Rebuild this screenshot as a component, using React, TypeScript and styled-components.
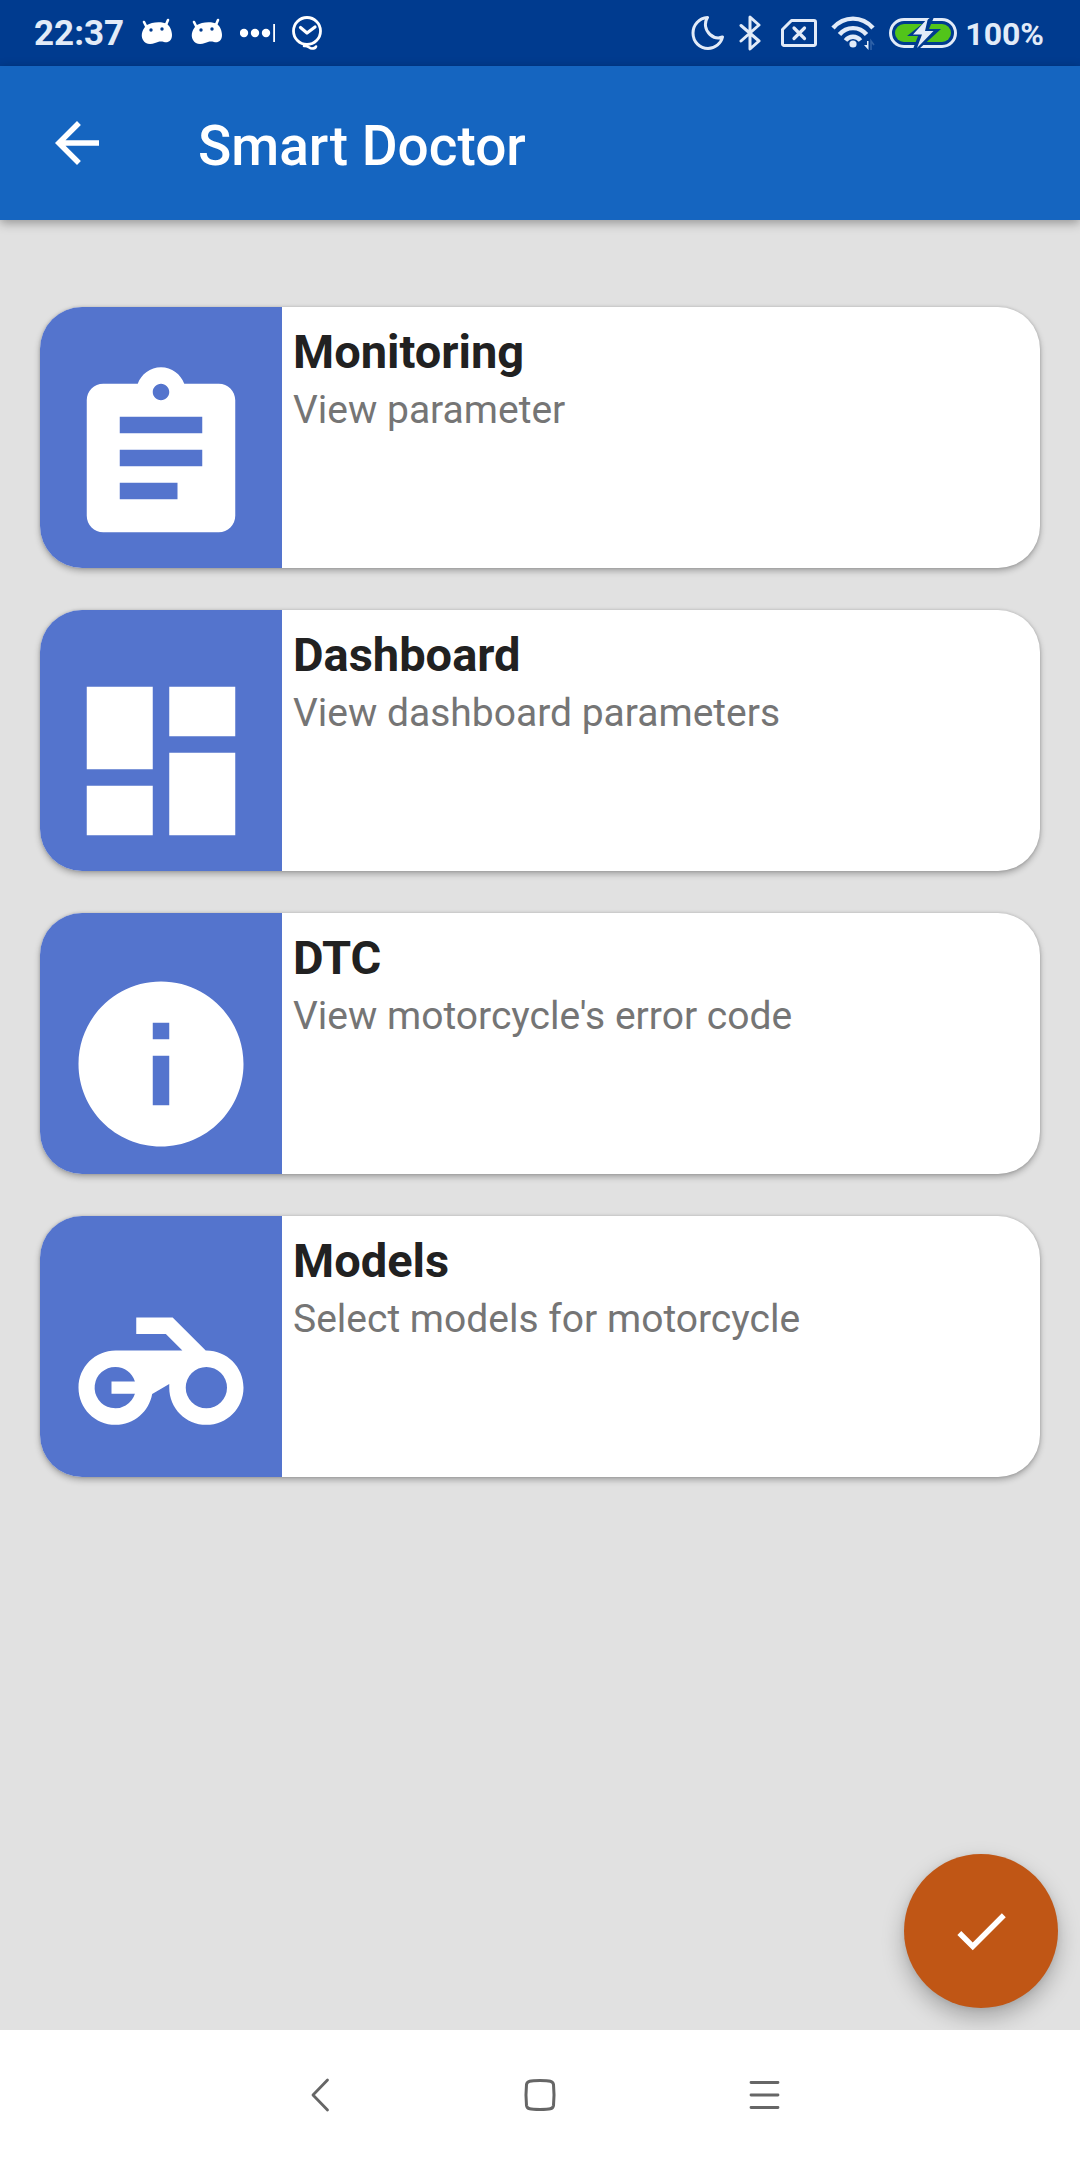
import React from "react";
import styled, { createGlobalStyle } from "styled-components";

const Global = createGlobalStyle`
  *, *::before, *::after { box-sizing: border-box; }
  body { margin: 0; font-family: Roboto, "Noto Sans", sans-serif; background: #e1e1e1; }
  h1, h2, p, ul { margin: 0; padding: 0; }
  button { border: 0; padding: 0; font: inherit; cursor: pointer; }
  svg { display: block; flex: none; }
`;

const Page = styled.div`
  min-height: 100vh;
  display: flex;
  flex-direction: column;
`;

const StatusBar = styled.div`
  height: 66px;
  padding: 0 36px 0 34px;
  display: flex;
  align-items: center;
  justify-content: space-between;
  background: #003b8f;
  color: #e2ebf8;
`;

const StatusGroup = styled.div<{ $gap: number }>`
  display: flex;
  align-items: center;
  gap: ${(p) => p.$gap}px;
`;

const StatusText = styled.span<{ $size: number }>`
  font-size: ${(p) => p.$size}px;
  line-height: 40px;
  padding-top: 2px;
  font-weight: 700;
`;

const AppBar = styled.header`
  position: relative;
  height: 154px;
  padding: 0 44px;
  display: flex;
  align-items: center;
  gap: 88px;
  background: #1565c0;
  color: #fff;
  box-shadow: 0 3px 10px rgba(0, 0, 0, 0.34);
`;

const IconButton = styled.button`
  display: grid;
  place-items: center;
  background: none;
  color: inherit;
`;

const AppTitle = styled.h1`
  font-size: 55px;
  line-height: 64px;
  font-weight: 500;
  padding-top: 6px;
`;

const Content = styled.main`
  position: relative;
  flex: 1;
  padding: 87px 40px;
`;

const CardList = styled.ul`
  list-style: none;
  display: flex;
  flex-direction: column;
  gap: 42px;
`;

const Card = styled.li`
  display: flex;
  min-height: 261px;
  border-radius: 42px;
  overflow: hidden;
  background: #fff;
  box-shadow: 0 3px 6px rgba(0, 0, 0, 0.28), 0 0 3px rgba(0, 0, 0, 0.16);
`;

const CardIcon = styled.div`
  flex: none;
  padding: 52px 22px 11px;
  background: #5474cd;
  color: #fff;
`;

const CardText = styled.div`
  padding: 16px 11px;
`;

const CardTitle = styled.h2`
  font-size: 47px;
  line-height: 58px;
  font-weight: 700;
  color: #212121;
`;

const CardNote = styled.p`
  font-size: 39px;
  line-height: 58px;
  color: #757575;
`;

const Fab = styled.button`
  position: absolute;
  right: 22px;
  bottom: 22px;
  width: 154px;
  height: 154px;
  border-radius: 50%;
  display: grid;
  place-items: center;
  background: #c05615;
  color: #fff;
  box-shadow: 0 10px 22px rgba(0, 0, 0, 0.26), 0 1px 6px rgba(0, 0, 0, 0.08);
`;

const NavBar = styled.nav`
  position: relative;
  height: 130px;
  display: flex;
  align-items: center;
  justify-content: center;
  gap: 102px;
  background: #fff;
  color: #666;
`;

const NavButton = styled(IconButton)`
  width: 120px;
  height: 100px;
`;

const Droid = () => (
  <svg width="34" height="30" viewBox="0 0 34 30" aria-hidden="true">
    <path d="M4 4l3 6M28 2l-3 7" stroke="#fff" strokeWidth="2.6" strokeLinecap="round" />
    <path d="M7 7C11 4 22 3 27 6c3 2 5 7 5 11 0 6-4 8-8 7-4-1-6 0-9 1-5 2-10 1-12-3C0 17 3 10 7 7z" fill="#fff" />
    <circle cx="11" cy="12" r="1.7" fill="#003b8f" />
    <circle cx="22" cy="11" r="1.7" fill="#003b8f" />
  </svg>
);

const Dots = () => (
  <svg width="36" height="20" viewBox="0 0 36 20" fill="#fff" aria-hidden="true">
    <circle cx="4" cy="10" r="4.2" />
    <circle cx="15" cy="10" r="4.2" />
    <circle cx="26" cy="10" r="4.2" />
    <rect x="33.2" y="1" width="1.8" height="18" />
  </svg>
);

const QClock = () => (
  <svg width="30" height="34" viewBox="0 0 30 34" fill="none" stroke="#fff" aria-hidden="true">
    <circle cx="15" cy="15" r="13.5" strokeWidth="2.8" />
    <path d="M8.5 11.5l6.5 5.500 8-6" strokeWidth="3.2" strokeLinecap="round" strokeLinejoin="round" />
    <path d="M12 30c4-1 5 2.500 8 2.500 2 0 3.500-.5 4-2" strokeWidth="2.6" strokeLinecap="round" />
  </svg>
);

const Moon = () => (
  <svg width="34" height="34" viewBox="0 0 34 34" fill="none" stroke="currentColor" strokeWidth="3" strokeLinejoin="round" aria-hidden="true">
    <path d="M16.500 1.500C8 2 2 9 2 17c0 9 7 15.500 15 15.500 7 0 13-5 14.500-11.500C28 22.500 23 22 19 18.500 14 14 13 7 16.500 1.500z" />
  </svg>
);

const Bluetooth = () => (
  <svg width="28" height="36" viewBox="0 0 28 36" fill="none" stroke="currentColor" strokeWidth="3" strokeLinejoin="round" strokeLinecap="round" aria-hidden="true">
    <path d="M2 10.500l18 15.500-9 8V2l9 8L2 26" />
  </svg>
);

const NoSim = () => (
  <svg width="36" height="28" viewBox="0 0 36 28" fill="none" stroke="currentColor" aria-hidden="true">
    <path d="M10.500 1.500H33a1.500 1.500 0 011.500 1.500v22a1.500 1.500 0 01-1.500 1.500H3A1.500 1.500 0 011.500 25V10.500z" strokeWidth="3" strokeLinejoin="round" />
    <path d="M13 9l10.500 10.500M23.500 9L13 19.500" strokeWidth="3.200" strokeLinecap="round" />
  </svg>
);

const Wifi = () => (
  <svg width="44" height="34" viewBox="0 0 44 34" fill="none" stroke="currentColor" aria-hidden="true">
    <path d="M2 12C13-.5 31-.5 42 12" strokeWidth="4.400" />
    <path d="M8.500 18.500c7-8.500 20-8.500 27 0" strokeWidth="4.400" />
    <path d="M14.500 24.500c4-5 11-5 15 0" strokeWidth="4.400" />
    <circle cx="22" cy="28" r="3.600" fill="currentColor" stroke="none" />
    <path d="M37.500 25v9l-4.500-5h3v-4z" fill="currentColor" stroke="none" />
    <path d="M40 34v-9l3 4" stroke="#2f62a8" strokeWidth="1.600" />
  </svg>
);

const Battery = () => (
  <svg width="68" height="32" viewBox="0 0 68 32" aria-hidden="true">
    <rect x="1.500" y="2.500" width="65" height="27" rx="13.500" fill="none" stroke="currentColor" strokeWidth="3" />
    <rect x="6" y="7" width="56" height="18" rx="9" fill="#52c41a" />
    <path d="M42 0L18 19h11l-5 13h6l22-20H40l5-12z" fill="#003b8f" />
    <path d="M39 1L24 17.500h9L28 31l16.500-17H36z" fill="currentColor" />
  </svg>
);

const Glyph = ({ d, size }: { d: string; size: number }) => (
  <svg width={size} height={size} viewBox="0 0 24 24" fill="currentColor" aria-hidden="true">
    <path d={d} />
  </svg>
);

const ARROW = "M20 11H7.830l5.590-5.590L12 4l-8 8 8 8 1.410-1.410L7.830 13H20v-2z";
const CHECK = "M9 16.170L4.830 12l-1.420 1.410L9 19 21 7l-1.410-1.410z";

const items = [
  {
    title: "Monitoring",
    note: "View parameter",
    d: "M19 3h-4.180C14.400 1.840 13.300 1 12 1c-1.300 0-2.400.84-2.820 2H5c-1.100 0-2 .9-2 2v14c0 1.100.9 2 2 2h14c1.100 0 2-.9 2-2V5c0-1.100-.9-2-2-2zm-7 0c.55 0 1 .45 1 1s-.45 1-1 1-1-.45-1-1 .45-1 1-1zm2 14H7v-2h7v2zm3-4H7v-2h10v2zm0-4H7V7h10v2z",
  },
  {
    title: "Dashboard",
    note: "View dashboard parameters",
    d: "M3 13h8V3H3v10zm0 8h8v-6H3v6zm10 0h8V11h-8v10zm0-18v6h8V3h-8z",
  },
  {
    title: "DTC",
    note: "View motorcycle's error code",
    d: "M12 2C6.480 2 2 6.480 2 12s4.480 10 10 10 10-4.480 10-10S17.520 2 12 2zm1 15h-2v-6h2v6zm0-8h-2V7h2v2z",
  },
  {
    title: "Models",
    note: "Select models for motorcycle",
    d: "M17.420 10L13.410 6H9v2h3.590l2 2H6.500C4 10 2 12 2 14.500S4 19 6.500 19c2.220 0 4.060-1.620 4.430-3.740L13 14.060v.44c0 2.500 2 4.500 4.500 4.500s4.500-2 4.500-4.500-2-4.500-4.500-4.500zM8.840 15.250A2.500 2.500 0 116.500 12c1.080 0 2 .7 2.340 1.750H6v1.500zM17.500 17a2.500 2.500 0 110-5 2.500 2.500 0 010 5z",
  },
];

export default function App() {
  return (
    <Page>
      <Global />
      <StatusBar>
        <StatusGroup $gap={16}>
          <StatusText $size={35}>22:37</StatusText>
          <Droid />
          <Droid />
          <Dots />
          <QClock />
        </StatusGroup>
        <StatusGroup $gap={8}>
          <StatusGroup $gap={14}>
            <Moon />
            <Bluetooth />
            <NoSim />
            <Wifi />
            <Battery />
          </StatusGroup>
          <StatusText $size={32}>100%</StatusText>
        </StatusGroup>
      </StatusBar>
      <AppBar>
        <IconButton type="button" aria-label="Back">
          <Glyph d={ARROW} size={66} />
        </IconButton>
        <AppTitle>Smart Doctor</AppTitle>
      </AppBar>
      <Content>
        <CardList>
          {items.map((item) => (
            <Card key={item.title}>
              <CardIcon>
                <Glyph d={item.d} size={198} />
              </CardIcon>
              <CardText>
                <CardTitle>{item.title}</CardTitle>
                <CardNote>{item.note}</CardNote>
              </CardText>
            </Card>
          ))}
        </CardList>
        <Fab type="button" aria-label="Confirm">
          <Glyph d={CHECK} size={66} />
        </Fab>
      </Content>
      <NavBar aria-label="System navigation">
        <NavButton type="button" aria-label="Back">
          <svg width="36" height="36" viewBox="0 0 36 36" fill="none" stroke="currentColor" strokeWidth="2.800" strokeLinecap="round" strokeLinejoin="round">
            <path d="M27.500 3L13 18l14.500 15" />
          </svg>
        </NavButton>
        <NavButton type="button" aria-label="Home">
          <svg width="36" height="36" viewBox="0 0 36 36" fill="none" stroke="currentColor" strokeWidth="3">
            <path d="M18 3.500c10 0 13 .5 13.500 4 .6 6 .6 15 0 21-.5 3.500-3.500 4-13.500 4s-13-.5-13.500-4c-.6-6-.6-15 0-21 .5-3.500 3.500-4 13.500-4z" />
          </svg>
        </NavButton>
        <NavButton type="button" aria-label="Recent apps">
          <svg width="36" height="36" viewBox="0 0 36 36" fill="none" stroke="currentColor" strokeWidth="2.800" strokeLinecap="round">
            <path d="M7 5.500h27M7 18h27M7 30.500h27" />
          </svg>
        </NavButton>
      </NavBar>
    </Page>
  );
}
